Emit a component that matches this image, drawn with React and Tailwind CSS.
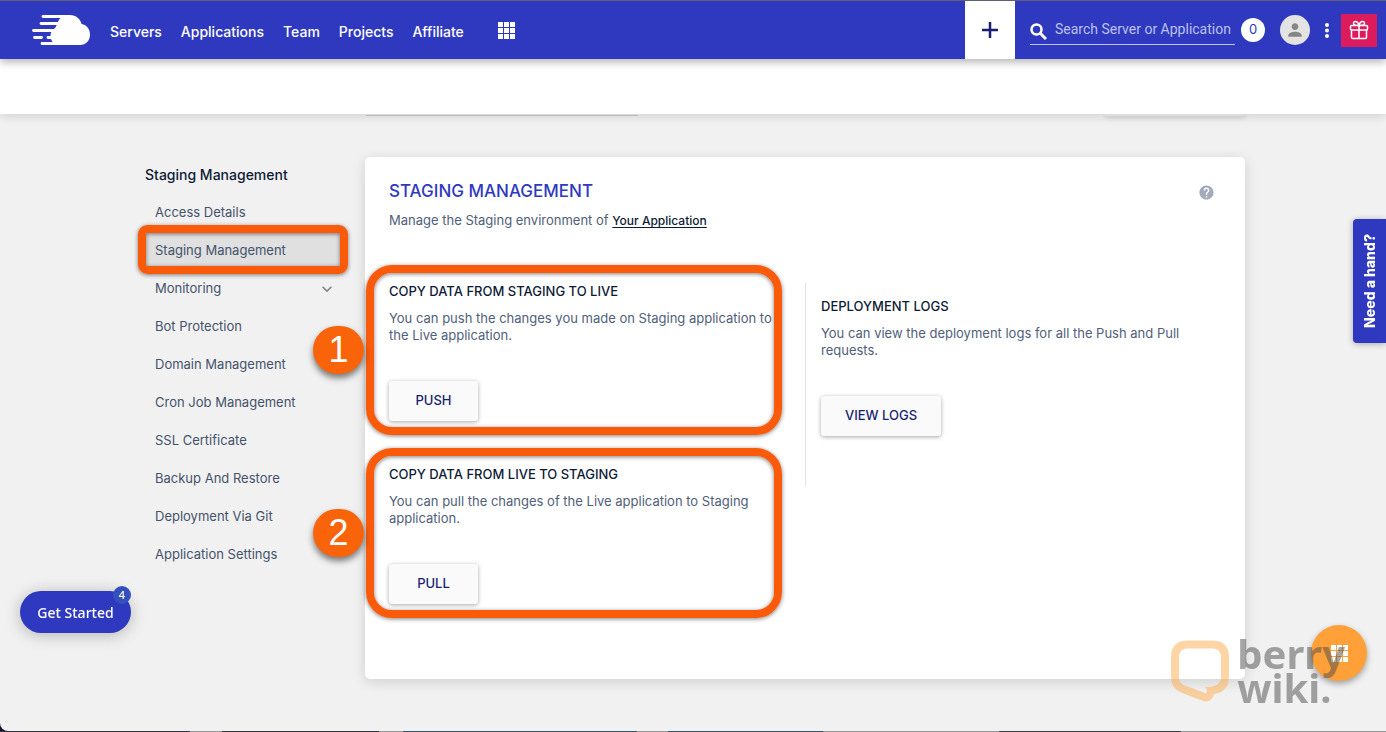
import { MdPerson, MdHelp, MdExpandMore } from "react-icons/md";

const NAV_LINKS = ["Servers", "Applications", "Team", "Projects", "Affiliate"];

const SIDEBAR_ITEMS = [
    { label: "Access Details" },
    { label: "Staging Management", active: true },
    { label: "Monitoring", expandable: true },
    { label: "Bot Protection" },
    { label: "Domain Management" },
    { label: "Cron Job Management" },
    { label: "SSL Certificate" },
    { label: "Backup And Restore" },
    { label: "Deployment Via Git" },
    { label: "Application Settings" },
];

const COPY_SECTIONS = [
    {
        step: 1,
        title: "COPY DATA FROM STAGING TO LIVE",
        text: "You can push the changes you made on Staging application to the Live application.",
        action: "PUSH",
    },
    {
        step: 2,
        title: "COPY DATA FROM LIVE TO STAGING",
        text: "You can pull the changes of the Live application to Staging application.",
        action: "PULL",
    },
];

const Logo = () => (
    <svg viewBox="0 0 60 32" className="h-8 w-[60px]" fill="none" stroke="#fff" strokeWidth="2.800" strokeLinecap="round">
        <path d="M12 2.500H38M10 9.500H28M2.500 16.500H24M3.500 23.500H10.500M17 23.500H24M11 29.500H46" />
        <path
            d="M29 4.500C32 1.500 35 1 39 1C45 1 49.500 5 50.500 10C56 11 59 15.500 59 20.500C59 26.500 55 31 49 31H27.500C22.500 30.500 19.500 26.500 19.500 21.500C19.500 18.500 21 16.500 23.500 14.500C26 12.500 26 8 29 4.500Z"
            fill="#fff"
            stroke="none"
        />
    </svg>
);

const GridIcon = ({ className }) => (
    <svg viewBox="0 0 17 17" className={className} fill="currentColor">
        <path d="M0 0H5V5H0ZM6 0H11V5H6ZM12 0H17V5H12ZM0 6H5V11H0ZM6 6H11V11H6ZM12 6H17V11H12ZM0 12H5V17H0ZM6 12H11V17H6ZM12 12H17V17H12Z" />
    </svg>
);

const SearchIcon = () => (
    <svg viewBox="0 0 17 17" className="mt-1 size-[17px] shrink-0" fill="none" stroke="#fff" strokeWidth="2.500">
        <circle cx="6.500" cy="6.500" r="5" />
        <path d="M10 10L16 16" strokeWidth="3" />
    </svg>
);

const GiftIcon = () => (
    <svg viewBox="0 0 20 20" className="size-5" fill="none" stroke="#fff" strokeWidth="1.500" strokeLinejoin="round">
        <rect x="1.500" y="5.500" width="17" height="4.500" rx="1" />
        <path d="M2.500 10V17.200Q2.500 18.500 3.800 18.500H16.200Q17.500 18.500 17.500 17.200V10M10 5.500V18.500" />
        <path d="M10 5.500C8.500 5.500 4.500 5.300 4.500 3.200C4.500 .5 9 .8 10 5.500ZM10 5.500C11.500 5.500 15.500 5.300 15.500 3.200C15.500 .5 11 .8 10 5.500Z" />
    </svg>
);

const Header = () => (
    <header className="relative z-20 flex h-[59px] items-center border-t border-[#5f6074] bg-[#2f39bf] pl-[31px] text-white shadow-[0_3px_8px_rgba(0,0,0,0.3)]">
        <a href="#" aria-label="Home" className="mr-[19px]">
            <Logo />
        </a>
        <nav className="flex items-center gap-[19px] pt-0.5 text-[14px] font-medium">
            {NAV_LINKS.map((link) => (
                <a key={link} href="#">
                    {link}
                </a>
            ))}
        </nav>
        <button aria-label="Apps" className="ml-[34px]">
            <GridIcon className="size-[17px]" />
        </button>

        <button aria-label="Add" className="ml-auto flex w-[50px] items-center justify-center self-stretch bg-white">
            <svg viewBox="0 0 16 16" className="size-4" stroke="#1b1f72" strokeWidth="2.500">
                <path d="M8 0V16M0 8H16" />
            </svg>
        </button>
        <label className="ml-[15px] flex h-[30px] w-[205px] items-center border-b border-white/70">
            <SearchIcon />
            <input
                type="text"
                aria-label="Search"
                placeholder="Search Server or Application"
                className="ml-2 w-full min-w-0 bg-transparent font-[Roboto] text-[14px] outline-none placeholder:text-[#bcc0f0]"
            />
        </label>
        <span className="ml-1.5 flex size-6 items-center justify-center rounded-full bg-white text-[13px] text-[#2f39bf]">0</span>
        <button aria-label="Account" className="ml-[15px] flex size-[30px] items-center justify-center rounded-full bg-[#e3e3e3]">
            <MdPerson className="size-5 text-[#858585]" />
        </button>
        <button aria-label="More" className="ml-[15px]">
            <svg viewBox="0 0 4 15" className="h-[15px] w-1" fill="#fff">
                <circle cx="2" cy="2" r="2" />
                <circle cx="2" cy="7.500" r="2" />
                <circle cx="2" cy="13" r="2" />
            </svg>
        </button>
        <button aria-label="Gifts" className="mr-[9px] ml-3 flex h-[33px] w-9 items-center justify-center bg-[#dc1b5c]">
            <GiftIcon />
        </button>
    </header>
);

const Sidebar = () => (
    <aside className="w-[204px] shrink-0">
        <h2 className="px-1 text-[14px] leading-9 font-medium text-[#0e1b35]">Staging Management</h2>
        <ul className="pt-px">
            {SIDEBAR_ITEMS.map(({ label, active, expandable }) => (
                <li key={label} className="relative">
                    <a
                        href="#"
                        className={`flex h-[38px] items-center justify-between pr-2 pl-3.5 text-[13px] text-[#44536b] ${active ? "bg-[#e0e0e0]" : ""}`}
                    >
                        {label}
                        {expandable && <MdExpandMore className="size-5 text-[#858585]" />}
                    </a>
                    {active && (
                        <span className="pointer-events-none absolute -inset-x-[3px] -top-[7px] -bottom-1 rounded-[9px] border-8 border-[#f95b0a] shadow-[0_1px_4px_rgba(0,0,0,0.5),inset_0_1px_4px_rgba(0,0,0,0.5)]" />
                    )}
                </li>
            ))}
        </ul>
    </aside>
);

const ActionBlock = ({ title, text, action }) => (
    <>
        <h3 className="text-[13px] leading-4 font-medium text-[#0e1b35]">{title}</h3>
        <p className="mt-[11px] text-[13px] leading-[17px] text-[#50607a]">{text}</p>
        <button className="mt-[37px] h-10 min-w-[89px] rounded-[3px] bg-[#fafafa] px-6 text-[13px] font-medium text-[#1b1f72] shadow-[0_1px_4px_rgba(0,0,0,0.35)]">
            {action}
        </button>
    </>
);

const StagingCard = () => (
    <section className="min-w-0 flex-1 rounded-[5px] bg-white px-6 pt-[22px] pb-[75px] shadow-[0_3px_14px_rgba(0,0,0,0.14)]">
        <div className="flex items-end justify-between">
            <h1 className="text-[17px] leading-6 font-medium text-[#2f39bf]">STAGING MANAGEMENT</h1>
            <MdHelp className="mr-1.5 mb-0.5 size-[17px] text-[#a3abba]" />
        </div>
        <p className="mt-[7px] text-[13px] leading-5 text-[#50607a]">
            Manage the Staging environment of{" "}
            <a href="#" className="text-[12px] font-medium text-[#0e1b35] underline underline-offset-2">
                Your Application
            </a>
        </p>

        <div className="mt-[52px] grid grid-cols-2 items-start">
            <div className="flex flex-col gap-[45px]">
                {COPY_SECTIONS.map(({ step, ...block }) => (
                    <div key={step} className="relative pr-7">
                        <ActionBlock {...block} />
                        {/* Highlight frame and step number */}
                        <span className="pointer-events-none absolute -top-[18px] right-[23px] -bottom-3.5 -left-[23px] rounded-[26px] border-8 border-[#f95b0a] shadow-[0_1px_4px_rgba(0,0,0,0.5),inset_0_1px_4px_rgba(0,0,0,0.5)]" />
                        <span className="absolute top-[43px] -left-[76px] flex h-12 w-[51px] items-center justify-center rounded-full bg-[#f9640a] font-['Liberation_Sans'] text-[36px] leading-none text-white shadow-[0_4px_6px_rgba(0,0,0,0.5)]">
                            {step}
                        </span>
                    </div>
                ))}
            </div>
            <div className="h-[203px] border-l border-[#e2e2e2] pt-[15px] pl-[15px]">
                <div className="pr-8">
                    <ActionBlock
                        title="DEPLOYMENT LOGS"
                        text="You can view the deployment logs for all the Push and Pull requests."
                        action="VIEW LOGS"
                    />
                </div>
            </div>
        </div>
    </section>
);

const Watermark = () => (
    <div className="pointer-events-none fixed right-[41px] bottom-[27px] z-40 flex items-center gap-2 opacity-50">
        <svg viewBox="0 0 58 64" className="h-16 w-[58px]" fill="none" stroke="#ffac4d" strokeWidth="8" strokeLinejoin="round">
            <path d="M17 5.500H41Q54 5.500 54 18V38Q54 49 43 51L40 52Q38 60 33 58L12 50Q4 47 4 38V18Q4 5.500 17 5.500Z" />
            <path d="M34 48H43V54H38Z" fill="#ffac4d" stroke="none" />
        </svg>
        <div className="font-['Noto_Sans'] text-[40px] leading-[34px] font-bold text-[#4d4d4d]">
            <div>berry</div>
            <div>wiki.</div>
        </div>
    </div>
);

// Sliver of the desktop taskbar under the browser window
const Taskbar = () => (
    <div className="flex h-px bg-[#969696]">
        <span className="w-[190px] bg-[#33343f]" />
        <span className="ml-8 w-[157px] bg-[#33343f]" />
        <span className="ml-6 w-[234px] bg-[#33566f]" />
        <span className="ml-[31px] w-[155px] bg-[#33566f]" />
        <span className="ml-44 w-[182px] bg-[#3f4046]" />
    </div>
);

const App = () => {
    return (
        <div className="flex min-h-screen flex-col bg-[#14142a] font-['Inter',sans-serif]">
            <div className="flex-1 rounded-bl-lg bg-[#f1f1f1]">
                <Header />
                <div className="relative z-10 h-[55px] bg-white shadow-[0_2px_10px_rgba(0,0,0,0.14)]" />

                {/* Bottom edges of the cards scrolled under the bar */}
                <div className="mx-auto flex h-0.5 w-full max-w-[1104px] justify-between pl-[225px]">
                    <span className="w-[272px] border-b border-[#c9c9c9]" />
                    <span className="w-[140px] rounded-b shadow-[0_1px_5px_rgba(0,0,0,0.25)]" />
                </div>

                <main className="mx-auto flex max-w-[1104px] gap-5 pt-[41px] pb-12">
                    <Sidebar />
                    <StagingCard />
                </main>
            </div>
            <Taskbar />

            <button className="fixed top-[219px] right-0 z-30 flex h-[124px] w-[33px] items-center justify-center rounded-l bg-[#2f39bf] text-white shadow-[0_1px_6px_rgba(0,0,0,0.3)]">
                <span className="rotate-180 text-[14px] font-extrabold [writing-mode:vertical-rl]">Need a hand?</span>
            </button>

            <button className="fixed bottom-[99px] left-5 z-30 h-[42px] min-w-[111px] rounded-full bg-[#2f39bf] px-4 font-['Noto_Sans'] text-[14px] font-medium text-white shadow-[0_2px_16px_rgba(0,0,0,0.25)]">
                Get Started
                <span className="absolute -top-[5px] right-0 flex size-[18px] items-center justify-center rounded-full bg-[#3350bd] text-[11px]">
                    4
                </span>
            </button>

            <button
                aria-label="Open menu"
                className="fixed right-[19px] bottom-[51px] z-30 flex size-14 items-center justify-center rounded-full bg-[#ffa138] text-white shadow-[0_3px_6px_rgba(0,0,0,0.35)]"
            >
                <GridIcon className="size-[17px]" />
            </button>
            <Watermark />
        </div>
    );
};

export default App;
